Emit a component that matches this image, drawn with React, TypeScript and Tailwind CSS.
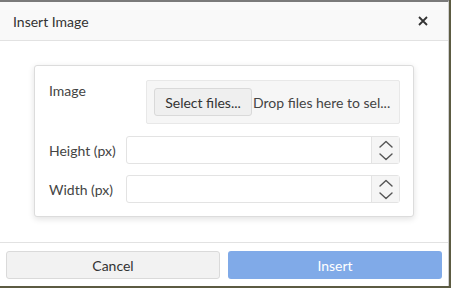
import React from "react";

const Chevron = ({ up }: { up?: boolean }) => (
  <svg width="14" height="8" viewBox="0 0 14 8" fill="none">
    <path
      d={up ? "M1 7L7 1.5L13 7" : "M1 1L7 6.5L13 1"}
      stroke="#555"
      strokeWidth="1.4"
      strokeLinecap="round"
      strokeLinejoin="round"
    />
  </svg>
);

const NumberField = ({ label }: { label: string }) => (
  <div className="flex items-center">
    <label className="w-[77px] text-[14px] text-[#444]">{label}</label>
    <div className="flex h-[28px] w-[274px] rounded-[3px] border border-[#e3e3e3] bg-white">
      <input className="min-w-0 flex-1 bg-transparent px-2 text-[14px] outline-none" />
      <div className="flex w-[28px] flex-col items-center justify-center gap-[5px] border-l border-[#e3e3e3] bg-[#f5f5f5]">
        <Chevron up />
        <Chevron />
      </div>
    </div>
  </div>
);

export default function App() {
  return (
    <div
      className="h-[288px] w-[451px] bg-[#5c5b42]"
      style={{ fontFamily: "Lato, 'Open Sans', sans-serif" }}
    >
      <div className="flex h-[286px] w-[449px] flex-col border-t-2 border-r border-t-[#7a7a7a] border-r-[#d0d0d0] bg-white">
        {/* header */}
        <div className="flex h-[39px] items-center justify-between border-b border-[#e2e2e2] bg-[#f9f9f9] pl-[13px] pr-[20px]">
          <span className="text-[14px] text-[#333]">Insert Image</span>
          <svg width="10" height="10" viewBox="0 0 10 10">
            <path d="M1 1L9 9M9 1L1 9" stroke="#333" strokeWidth="1.8" />
          </svg>
        </div>

        {/* body */}
        <div className="flex-1 pl-[34px] pt-[24px]">
          <div className="flex w-[380px] flex-col rounded-[3px] border border-[#dcdcdc] bg-white pb-[13px] pl-[14px] pr-[13px] pt-[14px] shadow-[0_2px_6px_rgba(0,0,0,0.12)]">
            <div className="flex">
              <label className="w-[97px] text-[14px] text-[#444]">Image</label>
              <div className="flex h-[44px] w-[254px] items-center overflow-hidden rounded-[2px] border border-[#e8e8e8] bg-[#f6f6f6] px-[7px]">
                <button className="h-[28px] w-[98px] shrink-0 rounded-[3px] border border-[#d9d9d9] bg-[#efefef] text-[14px] text-[#333]">
                  Select files...
                </button>
                <span className="ml-[1px] whitespace-nowrap text-[14px] text-[#444]">
                  Drop files here to sel...
                </span>
              </div>
            </div>
            <div className="mt-[12px] flex flex-col gap-[11px]">
              <NumberField label="Height (px)" />
              <NumberField label="Width (px)" />
            </div>
          </div>
        </div>

        {/* footer */}
        <div className="flex gap-[8px] border-t border-[#e2e2e2] px-[6px] pb-[7px] pt-[8px]">
          <button className="h-[28px] w-[214px] rounded-[3px] border border-[#dadada] bg-[#f2f2f2] text-[14px] text-[#333]">
            Cancel
          </button>
          <button className="h-[28px] w-[214px] rounded-[3px] bg-[#80aae8] text-[14px] text-white">
            Insert
          </button>
        </div>
      </div>
    </div>
  );
}
